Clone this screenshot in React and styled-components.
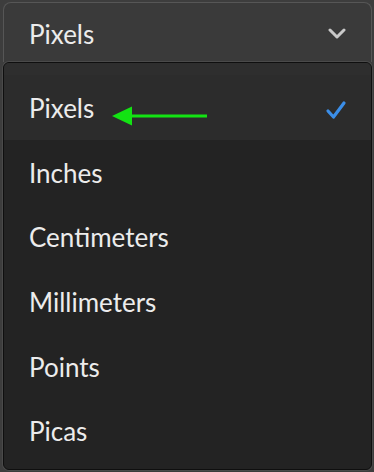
import React from 'react';
import styled, { createGlobalStyle } from 'styled-components';

const Global = createGlobalStyle`
  html, body { margin: 0; padding: 0; background: #3d3d3d; }
  body { font-family: 'Lato', 'Open Sans', sans-serif; }
`;

const Page = styled.div`
  width: 374px;
  height: 472px;
  display: flex;
  flex-direction: column;
  padding: 2px 2px 2px 3px;
  box-sizing: border-box;
  overflow: hidden;
`;

const Select = styled.div`
  height: 60px;
  flex: none;
  display: flex;
  align-items: center;
  justify-content: space-between;
  padding: 3px 24px 0 25px;
  background: #3a3a3a;
  border: 1px solid #565656;
  border-bottom: none;
  border-radius: 8px 8px 0 0;
  color: #ececec;
  font-size: 26px;
  box-sizing: border-box;
`;

const Menu = styled.div`
  flex: 1;
  display: flex;
  flex-direction: column;
  background: #232323;
  border: 1px solid #0f0f0f;
  box-shadow: 0 0 0 1px #4a4a4a;
  border-radius: 6px;
  padding-top: 12px;
  position: relative;
  overflow: hidden;
  &::before {
    content: '';
    position: absolute;
    left: 0; right: 0; top: 0;
    height: 12px;
    background: #2e2e2e;
  }
`;

const Item = styled.div`
  height: 64.6px;
  flex: none;
  display: flex;
  align-items: center;
  padding: 2px 24px 0 25px;
  box-sizing: border-box;
  background: ${p => (p.$selected ? '#2c2c2c' : 'transparent')};
  color: #ececec;
  font-size: 26px;
  position: relative;
`;

const Label = styled.span`
  flex: 1;
`;

const Arrow = styled.svg`
  position: absolute;
  left: 106px;
  top: 31px;
`;

const CheckMark = styled.svg`
  margin-top: 3px;
`;

const Chevron = () => (
  <svg width="20" height="12" viewBox="0 0 20 12">
    <path d="M3 2 L10 9 L17 2" fill="none" stroke="#c9c9c9" strokeWidth="3" strokeLinecap="round" strokeLinejoin="round" />
  </svg>
);

const Check = () => (
  <CheckMark width="22" height="20" viewBox="0 0 22 20">
    <path d="M3 11 L8.5 17 L19 3" fill="none" stroke="#3b8ee8" strokeWidth="3.2" strokeLinecap="round" strokeLinejoin="round" />
  </CheckMark>
);

const units = ['Pixels', 'Inches', 'Centimeters', 'Millimeters', 'Points', 'Picas'];

export default function App() {
  return (
    <Page>
      <Global />
      <Select>
        <span>Pixels</span>
        <Chevron />
      </Select>
      <Menu>
        {units.map(u => (
          <Item key={u} $selected={u === 'Pixels'}>
            <Label>{u}</Label>
            {u === 'Pixels' && (
              <>
                <Arrow width="100" height="20" viewBox="0 0 100 20">
                  <path d="M20 10 L97 10" stroke="#13e313" strokeWidth="3" />
                  <path d="M2 10 L22 0.5 L22 19.5 Z" fill="#13e313" />
                </Arrow>
                <Check />
              </>
            )}
          </Item>
        ))}
      </Menu>
    </Page>
  );
}
